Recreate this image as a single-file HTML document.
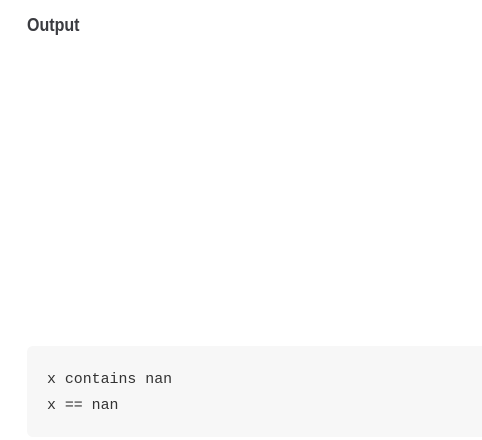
<!DOCTYPE html>
<html><head><style>
body{margin:0;background:#fff;width:482px;height:440px;overflow:hidden;position:relative}
h3{position:absolute;left:27px;top:15px;margin:0;font:bold 18px/20px "Liberation Sans",sans-serif;color:#3a3b40;transform:scaleX(0.89);transform-origin:left}
.box{position:absolute;left:27px;top:346px;width:470px;height:91px;background:#f7f7f7;border-radius:6px}
.code{position:absolute;left:47px;top:367px;font:14.9px/26px "Liberation Mono",monospace;color:#333;white-space:pre}
</style></head><body>
<h3>Output</h3>
<div class="box"></div>
<div class="code">x contains nan
x == nan</div>
</body></html>
